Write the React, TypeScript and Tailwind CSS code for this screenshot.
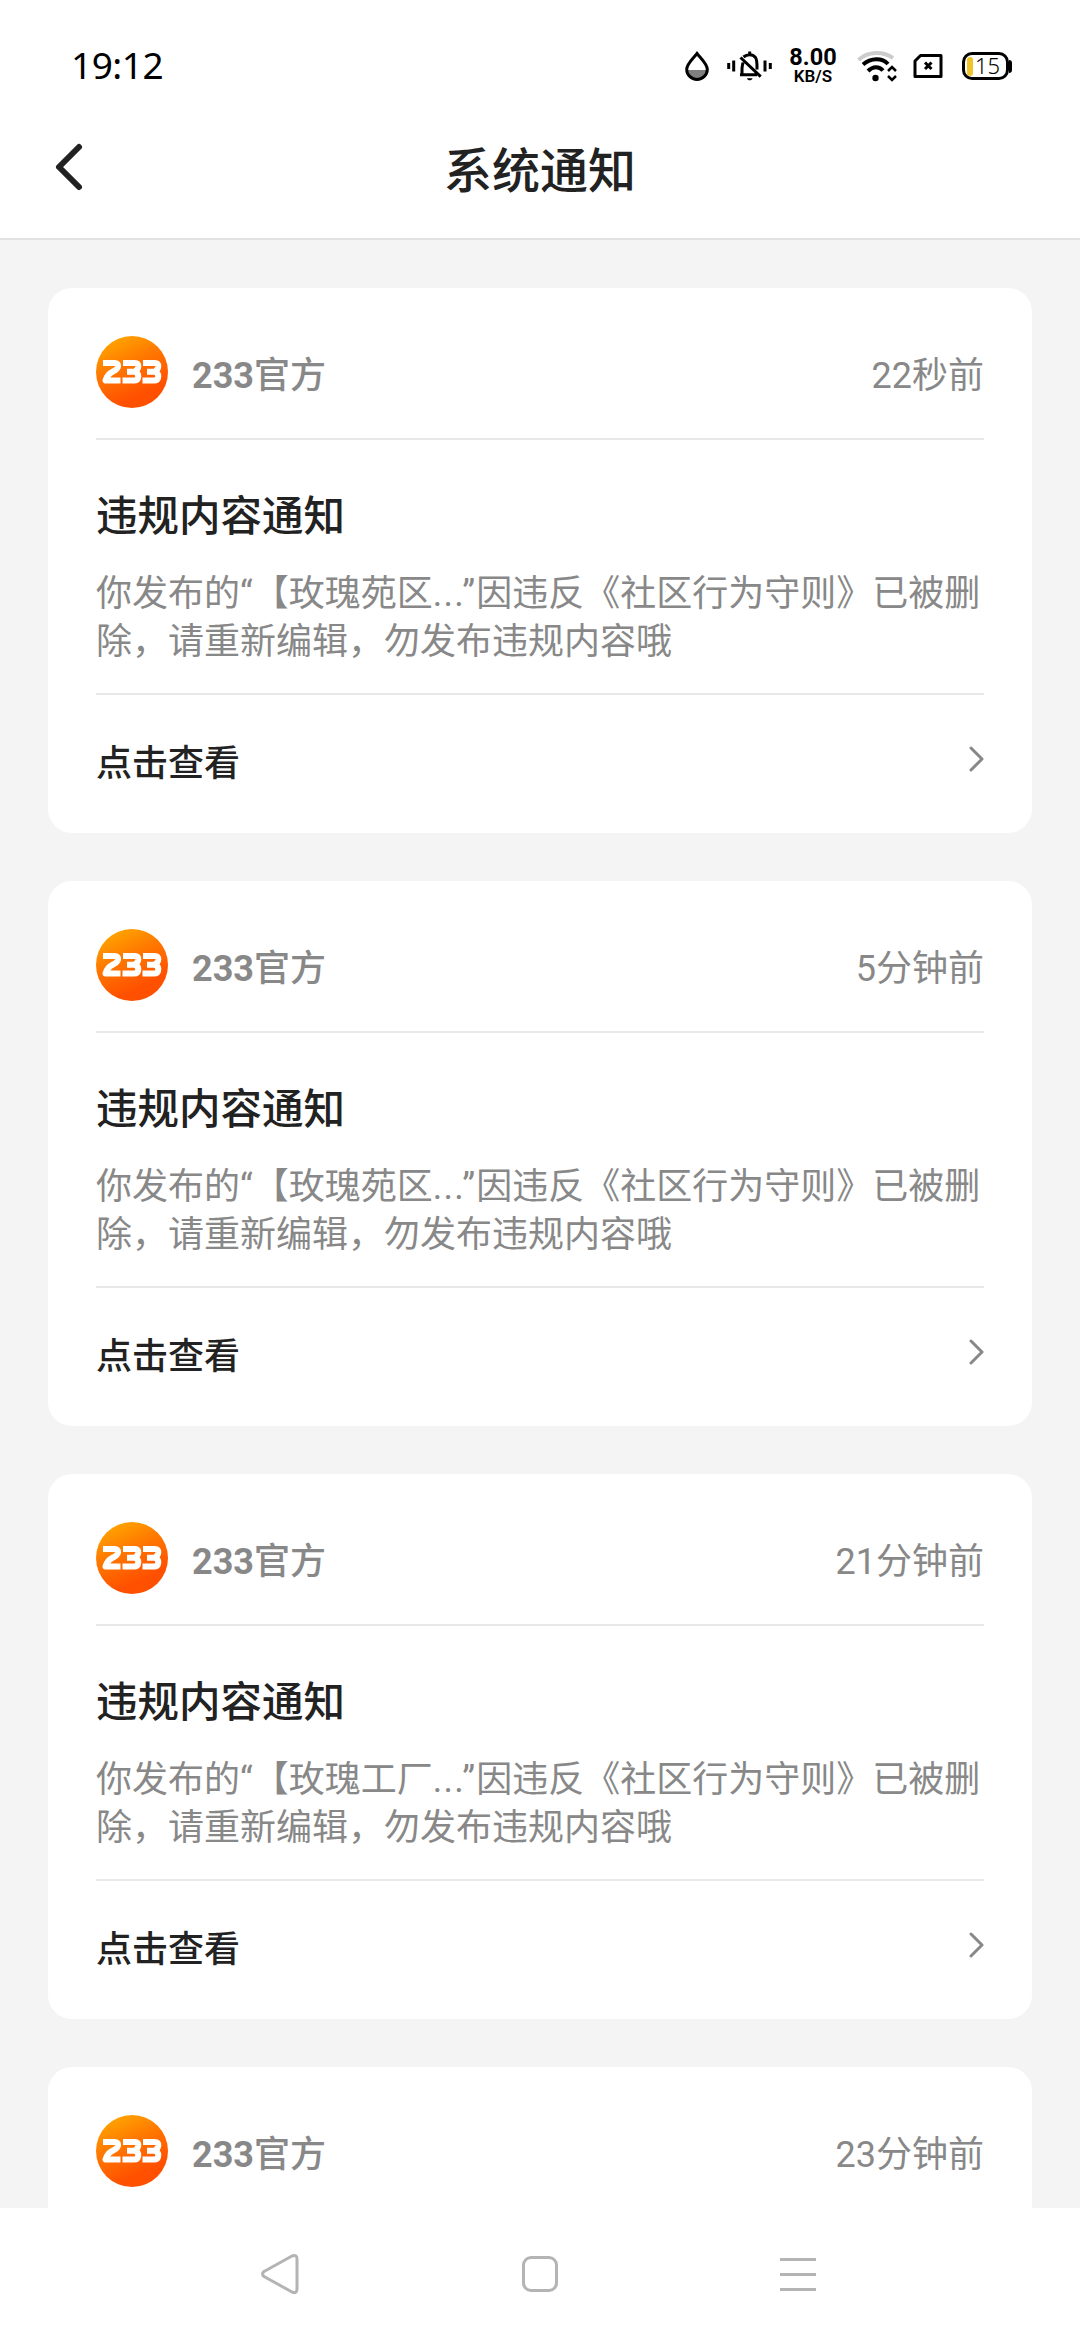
import React from "react";

type Notice = { time: string; subject?: string };

const notices: Notice[] = [
  { time: "22秒前", subject: "玫瑰苑区" },
  { time: "5分钟前", subject: "玫瑰苑区" },
  { time: "21分钟前", subject: "玫瑰工厂" },
];

function StatusBar() {
  return (
    <div className="flex h-[132px] shrink-0 items-center justify-between pl-[71px] pr-[68px] text-black">
      <span className="-mt-[4px] font-['Noto_Sans',sans-serif] text-[37px] leading-none tracking-[-0.5px]">19:12</span>
      <div className="flex items-center">
        <svg className="mr-[17px] h-[32px] w-[26px]" viewBox="0 0 26 32">
          <path d="M4 20H22C22 25 18 29 13 29S4 25 4 20Z" fill="#808080" />
          <path d="M13 3.5C9.500 8 2.700 14 2.700 19.300A10.300 10.100 0 0 0 23.300 19.300C23.300 14 16.500 8 13 3.500Z" fill="none" stroke="#000" strokeWidth="3" />
        </svg>
        <svg className="mr-[15px] h-[32px] w-[46px]" viewBox="0 0 46 32" fill="none" stroke="#000" strokeWidth="3">
          <path d="M1.700 13V19M6.700 10.500V21.500M43.300 13V19M38 10.500V21.500" />
          <path d="M16.500 7C20 4 25.500 3.500 28.500 7.500C30.200 10 30 12 30 19.500M22.700 1.500V5" />
          <path d="M13 24.700H30M15 24V19C15 17 15.500 15 16 12.500M13.500 7.500L33.700 26.700" />
          <path d="M20 28.300H25.500C25 31 20.500 31 20 28.300Z" fill="#000" stroke="none" />
        </svg>
        <div className="mr-[19px] flex w-[50px] flex-col items-center font-['Roboto',sans-serif] font-bold">
          <span className="text-[23.5px] leading-[21px]">8.00</span>
          <span className="text-[17px] font-semibold leading-[17px]">KB/S</span>
        </div>
        <svg className="mr-[16px] h-[32px] w-[40px]" viewBox="0 0 40 32" fill="none" strokeWidth="4">
          <path d="M1.500 10C11 1 26 1 36 8" stroke="#ccc" />
          <path d="M6 14.500C14 7.500 25 7.500 31 14M11 21C16 16 22 16 26 20.500" stroke="#000" />
          <circle cx="18.500" cy="28" r="3.200" fill="#000" />
          <path d="M31 21L35 17L39 21M31 26L35 30L39 26" stroke="#000" strokeWidth="2.500" />
        </svg>
        <svg className="mr-[19px] h-[26px] w-[30px]" viewBox="0 0 30 26" fill="none" stroke="#000" strokeWidth="3">
          <path d="M7.500 2.500H28V23.500H2V8Z" strokeLinejoin="round" />
          <path d="M12 9.500L18.500 16M18.500 9.500L12 16" />
        </svg>
        <div className="flex items-center">
          <div className="flex h-[28px] w-[47px] items-center rounded-[10px] border-[3px] border-black pl-[2px]">
            <i className="h-[19px] w-[6px] shrink-0 rounded-[3px] bg-[#efc42a]" />
            <span className="-mt-[2px] pl-[2px] font-['Noto_Sans',sans-serif] text-[22px] font-light leading-none">15</span>
          </div>
          <i className="h-[13px] w-[3px] rounded-r-full bg-black" />
        </div>
      </div>
    </div>
  );
}

function Header() {
  return (
    <header className="grid h-[108px] shrink-0 grid-cols-[1fr_auto_1fr] border-b-2 border-[#e1e1e1] bg-white">
      <svg className="ml-[54px] mt-[10px] h-[50px] w-[30px]" viewBox="0 0 30 50" fill="none" stroke="#222" strokeWidth="6" strokeLinecap="round" strokeLinejoin="round">
        <path d="M25 5L5 25L25 45" />
      </svg>
      <h1 className="mt-[12px] text-[48px] font-medium leading-[56px] text-[#222]">系统通知</h1>
    </header>
  );
}

function Avatar() {
  return (
    <div className="flex size-[72px] shrink-0 items-center justify-center rounded-full bg-linear-[155deg,#ffab00_5%,#ff7800_40%,#ff5000_75%]">
      <svg className="h-[26px] w-[60px]" viewBox="0 0 60 26" fill="none" stroke="#fff" strokeWidth="6">
        <path d="M1 4H12.500Q16.500 4 16 7.500Q15.500 10.500 11 12.500Q5 15.500 3.500 21.500H18.500" strokeLinejoin="round" />
        <path d="M21 4H33Q36.500 4 36.300 7.500Q36 11 32.500 12.700Q36.500 14 36.300 17.500Q36 21.500 32 21.500H20.500M25 12.700H33" />
        <path d="M41 4H53Q56.500 4 56.300 7.500Q56 11 52.500 12.700Q56.500 14 56.300 17.500Q56 21.500 52 21.500H40.500M45 12.700H53" />
      </svg>
    </div>
  );
}

function CardHeader({ time }: { time: string }) {
  return (
    <div className="flex h-[150px] shrink-0 items-center pt-[18px]">
      <Avatar />
      <span className="ml-[24px] mt-[7px] text-[36px] font-medium leading-[52px] text-[#888]">
        <b className="font-bold">233</b>官方
      </span>
      <time className="ml-auto mt-[7px] text-[36px] leading-[52px] text-[#888]">{time}</time>
    </div>
  );
}

function NoticeCard({ time, subject }: Notice) {
  return (
    <article className="flex h-[545px] shrink-0 flex-col rounded-[24px] bg-white px-[48px]">
      <CardHeader time={time} />
      <div className="h-[257px] shrink-0 border-y-2 border-[#e8e8e8]">
        <h2 className="mt-[47px] text-[41.500px] font-medium leading-[60px] text-[#222]">违规内容通知</h2>
        <p className="mt-[23px] whitespace-nowrap text-[36px] leading-[48px] text-[#888] [text-spacing-trim:space-all]">
          你发布的“【{subject}<span className="tracking-[1.3px]">...”</span>因违反《社区行为守则》已被删
          <br />
          除，请重新编辑，勿发布违规内容哦
        </p>
      </div>
      <div className="flex h-[138px] items-center justify-between">
        <span className="text-[36px] font-medium leading-[52px] text-[#222]">点击查看</span>
        <svg className="-mt-[10px] h-[28px] w-[16px]" viewBox="0 0 16 28" fill="none" stroke="#888" strokeWidth="3" strokeLinecap="round" strokeLinejoin="round">
          <path d="M3 3L14 14L3 25" />
        </svg>
      </div>
    </article>
  );
}

function NavBar() {
  return (
    <nav className="flex h-[132px] shrink-0 items-center justify-between bg-white pl-[261px] pr-[264px]">
      <svg className="h-[42px] w-[39px]" viewBox="0 0 39 42" fill="none" stroke="#b4b4b4" strokeWidth="3" strokeLinejoin="round">
        <path d="M3 18.500L31 3Q36 1 36 6V36Q36 41 31 39L3 23.500Q0 21 3 18.500Z" />
      </svg>
      <i className="size-[36px] rounded-[9px] border-[3px] border-[#b4b4b4]" />
      <div className="flex h-[33px] w-[36px] flex-col justify-between">
        <i className="h-[3px] bg-[#b4b4b4]" />
        <i className="h-[3px] bg-[#b4b4b4]" />
        <i className="h-[3px] bg-[#b4b4b4]" />
      </div>
    </nav>
  );
}

export default function App() {
  return (
    <div className="flex h-[2340px] w-[1080px] flex-col overflow-hidden bg-white font-['Roboto','Noto_Sans_CJK_SC',sans-serif]">
      <StatusBar />
      <Header />
      <main className="flex min-h-0 flex-1 flex-col gap-[48px] bg-[#f4f4f4] px-[48px] pt-[48px]">
        {notices.map((n) => (
          <NoticeCard key={n.time} {...n} />
        ))}
        <article className="h-[141px] rounded-t-[24px] bg-white px-[48px]">
          <CardHeader time="23分钟前" />
        </article>
      </main>
      <NavBar />
    </div>
  );
}
